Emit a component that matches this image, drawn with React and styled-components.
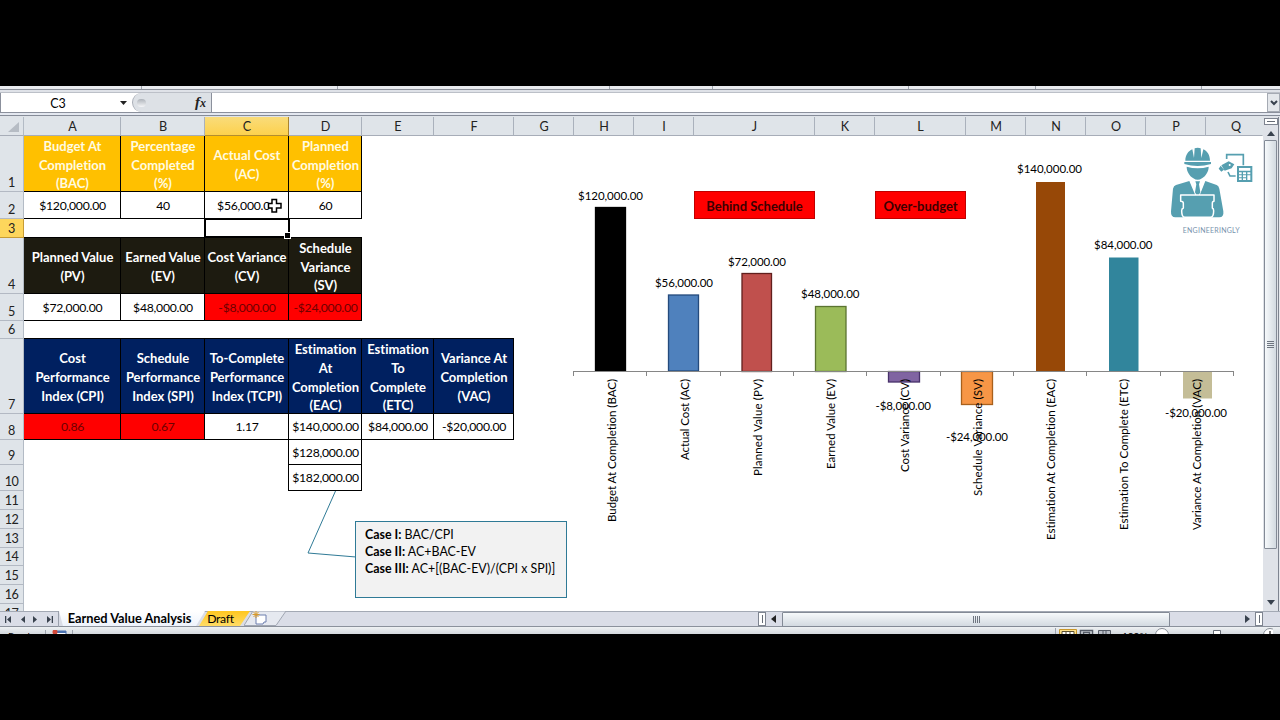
import React from "react";
import styled, {createGlobalStyle} from "styled-components";

const GlobalStyle = createGlobalStyle`
  * {
    box-sizing: border-box;
  }

  body {
    margin: 0;
    background: #000;
    font-family: Lato, "Open Sans", sans-serif;
    font-variant-ligatures: none;
    color: #000;
  }
`

const Screen = styled.div`
    width: 1280px;
    height: 720px;
    padding-top: 86px;
    background: #000;
    overflow: hidden;
`

const Window = styled.div`
    height: 548px;
    display: flex;
    flex-direction: column;
    background: #dfe3e8;
    overflow: hidden;
`

const RibbonEdge = styled.div`
    height: 7px;
    flex: none;
    display: flex;
    background: linear-gradient(#e9ecf0 0 3px, #8c919b 3px 4px, #dfe2e8 4px 6px, #bcc0c8 6px);
`

const RibbonGroup = styled.div`
    width: ${({$width}) => $width}px;
    height: 3px;
    border-right: 1px solid #9fa5ae;
`

const FormulaBar = styled.div`
    height: 24px;
    flex: none;
    display: flex;
    align-items: flex-start;
    background: linear-gradient(#fff 0 19px, #8b909c 19px 20px, #e4e8f0 20px 22px, #868c98 22px 23px, #dfe3e8 23px);
`

const NameBox = styled.div`
    width: 132px;
    height: 19px;
    display: flex;
    align-items: center;
    padding-top: 1px;
    border-left: 1px solid #8b909c;
    font-size: 12.5px;

  span {
    width: 114px;
    text-align: center;
  }
`

const FunctionBox = styled.div`
    width: 80px;
    height: 19px;
    display: flex;
    align-items: center;
    justify-content: space-between;
    padding: 0 5px 0 4px;
    background: #dde1e6;
    border-left: 1px solid #a9aeb7;
    border-right: 1px solid #8b909c;
    border-radius: 10px 0 0 10px;
    font: italic bold 15px "Liberation Serif", serif;
    color: #222;

  small {
    font-size: 12px;
  }
`

const Knob = styled.i`
    width: 9px;
    height: 8px;
    border-radius: 4px;
    background: linear-gradient(#aeb3ba, #f5f6f8);
`

const FormulaInput = styled.div`
    flex: 1;
`

const ExpandButton = styled.div`
    width: 13px;
    height: 19px;
    display: flex;
    align-items: center;
    justify-content: center;
    background: #e4e7eb;
    border: 1px solid #a5aab3;
`

const Main = styled.div`
    height: 494px;
    flex: none;
    display: flex;
`

const Sheet = styled.div`
    position: relative;
    width: 1263px;
    height: 494px;
    display: grid;
    grid-template-columns: 24px 97px 84px 84px 73px 72px 80px 60px 60px 60px 121px 60px 91px 60px 60px 60px 60px 57px;
    grid-template-rows: 19px 56px 27px 19px 56px 27px 18px 75px 26px 25px 26px 19px 19px 19px 18px 19px 19px 19px;
    background: #fff;
    overflow: hidden;
`

const Corner = styled.div`
    display: flex;
    align-items: flex-end;
    justify-content: flex-end;
    padding: 0 4px 3px 0;
    background: #dfe4e9;
    border-right: 1px solid #b3bbc5;
    border-bottom: 1px solid #a7adb8;
`

const ColumnHead = styled.div`
    display: flex;
    align-items: center;
    justify-content: center;
    padding: 1px 0 0 ${({$last}) => $last ? 4 : 1}px;
    background: ${({$active}) => $active ? 'linear-gradient(#f9dc7a, #fdd14d)' : '#dfe4e9'};
    border-right: 1px solid ${({$active, $last}) => $last ? 'transparent' : $active ? '#a98431' : '#aab1bc'};
    border-bottom: 1px solid ${({$active}) => $active ? '#b28d31' : '#a7adb8'};
    font-size: 12.6px;
    color: #222;
`

const RowHead = styled.div`
    grid-column: 1;
    grid-row: ${({$row}) => $row + 1};
    display: flex;
    align-items: flex-end;
    justify-content: center;
    background: ${({$active}) => $active ? '#fdd65c' : '#dfe4e9'};
    border-right: 1px solid ${({$active}) => $active ? '#c79c34' : '#b3bbc5'};
    border-bottom: 1px solid ${({$active}) => $active ? '#c79c34' : '#b3b9c3'};
    font-size: 12.6px;
    letter-spacing: -0.5px;
    line-height: 16px;
    color: #222;
`

const fills = {
    gold: ['#ffc000', '#fffbe0'],
    dark: ['#1d1b10', '#fff'],
    navy: ['#002060', '#fff'],
    red: ['#ff0000', '#6e0000'],
    plain: ['#fff', '#000'],
}

const Cell = styled.div`
    grid-column: ${({$col}) => $col + 1};
    grid-row: ${({$row}) => $row + 1};
    display: flex;
    align-items: center;
    justify-content: center;
    padding: ${({$head}) => $head ? 3 : 2}px 0 0 1px;
    margin-left: ${({$row}) => $row > 8 ? -1 : 0}px;
    background: ${({$fill}) => fills[$fill][0]};
    color: ${({$fill}) => fills[$fill][1]};
    border-right: 1px solid #000;
    border-bottom: 1px solid #000;
    border-left: ${({$row}) => $row > 8 ? '1px solid #000' : 'none'};
    font-size: ${({$head}) => $head ? '13px' : '12.2px'};
    font-weight: ${({$head}) => $head ? 700 : 400};
    letter-spacing: ${({$head}) => $head ? 0 : -0.24}px;
    line-height: 18.7px;
    text-align: center;
    white-space: pre;
`

const TopRule = styled.div`
    grid-column: 2 / ${({$to}) => $to};
    grid-row: ${({$row}) => $row + 1};
    align-self: end;
    height: 1px;
    background: #000;
`

const Selection = styled.div`
    grid-column: 4;
    grid-row: 4;
    position: relative;
    z-index: 1;
    margin: -1px -1px 0;
    border: 2px solid #000;

  &::after {
    content: "";
    position: absolute;
    right: -3px;
    bottom: -3px;
    width: 5px;
    height: 5px;
    background: #000;
    border: 1px solid #fff;
  }
`

const Flag = styled.div`
    grid-column: ${({$col}) => $col};
    grid-row: 3;
    z-index: 2;
    margin: -1px 0 0 ${({$shift}) => $shift || 0}px;
    padding-top: 1px;
    display: flex;
    align-items: center;
    justify-content: center;
    background: #ff0000;
    border: 1px solid #c00000;
    color: #3c0000;
    font-size: 13px;
    font-weight: 700;
`

const Overlay = styled.svg`
    position: absolute;
    left: ${({$left}) => $left}px;
    top: ${({$top}) => $top}px;
    z-index: ${({$z}) => $z || 1};
`

const Note = styled.div`
    position: absolute;
    left: 355px;
    top: 404px;
    width: 212px;
    height: 77px;
    padding: 4px 9px;
    background: #f2f2f2;
    border: 1px solid #2f7a96;
    font-size: 12.4px;
    line-height: 17px;
    white-space: nowrap;
`

const VerticalScroll = styled.div`
    width: 17px;
    display: flex;
    flex-direction: column;
    align-items: center;
    padding: 1px 2px 2px 0;
    background: linear-gradient(90deg, #dfe2e8 0 15px, #7e8490 15px 16px, #e4e7ec 16px);

  svg {
    margin: 6px 0 4px;
  }
`

const SplitBox = styled.div`
    width: ${({$wide}) => $wide ? 14 : 8}px;
    height: ${({$wide}) => $wide ? 7 : 14}px;
    flex: none;
    display: flex;
    align-items: center;
    justify-content: center;
    background: #fff;
    border: 1px solid #7e8490;

  i {
    width: ${({$wide}) => $wide ? 8 : 1}px;
    height: ${({$wide}) => $wide ? 1 : 8}px;
    background: #666c76;
  }
`

const Thumb = styled.div`
    display: flex;
    flex-direction: ${({$vertical}) => $vertical ? 'column' : 'row'};
    gap: 1px;
    align-items: center;
    justify-content: center;
    width: ${({$vertical}) => $vertical ? '13px' : '388px'};
    height: ${({$vertical}) => $vertical ? '409px' : '15px'};
    background: linear-gradient(${({$vertical}) => $vertical ? '90deg' : '180deg'}, #f6f9fb, #d3dae1);
    border: 1px solid #838a96;
    border-radius: 1px;

  i {
    width: ${({$vertical}) => $vertical ? 7 : 1}px;
    height: ${({$vertical}) => $vertical ? 1 : 7}px;
    background: #6e7580;
  }
`

const Spacer = styled.div`
    flex: 1;
`

const TabBar = styled.div`
    height: 16px;
    flex: none;
    display: flex;
    background: linear-gradient(#a3a9b4 0 1px, #dadde7 1px 15px, #8b919c 15px);
`

const TabNav = styled.div`
    width: 59px;
    display: flex;
    align-items: center;
    justify-content: space-between;
    padding: 0 5px;
    border-right: 1px solid #9aa0ac;
`

const Tab = styled.div`
    position: relative;
    width: ${({$width}) => $width}px;
    height: 15px;
    margin-right: -6px;
    padding-right: ${({$pad}) => $pad || 0}px;
    display: flex;
    align-items: center;
    justify-content: center;
    background: ${({$fill}) => $fill};
    clip-path: ${({$first}) => $first ? 'polygon(0 0, 100% 0, calc(100% - 9px) 100%, 4px 100%)' : 'polygon(9px 0, 100% 0, calc(100% - 10px) 100%, 0 100%)'};
    font-size: ${({$first}) => $first ? 12.8 : 12.2}px;
    font-weight: ${({$first}) => $first ? 700 : 400};
    letter-spacing: ${({$first}) => $first ? 0 : -0.3}px;
    line-height: 15px;
    white-space: nowrap;
`

const HorizontalScroll = styled.div`
    width: 522px;
    margin-left: auto;
    padding-right: 17px;
    display: flex;
    align-items: center;
`

const ScrollTrack = styled.div`
    flex: 1;
    display: flex;
    align-items: center;
    padding: 0 5px;

  ${Thumb} {
    margin: 0 auto 0 6px;
  }
`

const StatusBar = styled.div`
    position: relative;
    height: 7px;
    flex: none;
    display: flex;
    align-items: flex-start;
    justify-content: space-between;
    background: linear-gradient(#eef1f3, #d4d9de);
    font-size: 10px;
    line-height: 12px;
    overflow: hidden;
`

const StatusLeft = styled.div`
    display: flex;
    gap: 10px;
    padding: 3px 0 0 8px;
`

const StatusRight = styled.div`
    display: flex;
    width: 225px;
    padding-top: 1px;

  span {
    margin: 2px 2px 0 11px;
  }
`

const columns = 'ABCDEFGHIJKLMNOPQ'.split('')
const rows = Array.from({length: 17}, (_, i) => i + 1)

// [column, row, fill, text, is header]
const cells = [
    [1, 1, 'gold', 'Budget At\nCompletion\n(BAC)', true],
    [2, 1, 'gold', 'Percentage\nCompleted\n(%)', true],
    [3, 1, 'gold', 'Actual Cost\n(AC)', true],
    [4, 1, 'gold', 'Planned\nCompletion\n(%)', true],
    [1, 2, 'plain', '$120,000.00'],
    [2, 2, 'plain', '40'],
    [3, 2, 'plain', '$56,000.00'],
    [4, 2, 'plain', '60'],
    [1, 4, 'dark', 'Planned Value\n(PV)', true],
    [2, 4, 'dark', 'Earned Value\n(EV)', true],
    [3, 4, 'dark', 'Cost Variance\n(CV)', true],
    [4, 4, 'dark', 'Schedule\nVariance\n(SV)', true],
    [1, 5, 'plain', '$72,000.00'],
    [2, 5, 'plain', '$48,000.00'],
    [3, 5, 'red', '-$8,000.00'],
    [4, 5, 'red', '-$24,000.00'],
    [1, 7, 'navy', 'Cost\nPerformance\nIndex (CPI)', true],
    [2, 7, 'navy', 'Schedule\nPerformance\nIndex (SPI)', true],
    [3, 7, 'navy', 'To-Complete\nPerformance\nIndex (TCPI)', true],
    [4, 7, 'navy', 'Estimation\nAt\nCompletion\n(EAC)', true],
    [5, 7, 'navy', 'Estimation\nTo\nComplete\n(ETC)', true],
    [6, 7, 'navy', 'Variance At\nCompletion\n(VAC)', true],
    [1, 8, 'red', '0.86'],
    [2, 8, 'red', '0.67'],
    [3, 8, 'plain', '1.17'],
    [4, 8, 'plain', '$140,000.00'],
    [5, 8, 'plain', '$84,000.00'],
    [6, 8, 'plain', '-$20,000.00'],
    [4, 9, 'plain', '$128,000.00'],
    [4, 10, 'plain', '$182,000.00'],
]

// chart space starts at x 560, y 140; the zero axis is at y 231
const bars = [
    {name: 'Budget At Completion (BAC)', len: 143, x: 35.5, w: 30, y: 67.5, h: 163.5, fill: '#000', line: '#000', label: '$120,000.00', lx: 18, ly: 60, lw: 65},
    {name: 'Actual Cost (AC)', len: 81, x: 108.5, w: 30, y: 155, h: 76, fill: '#4f81bd', line: '#244a7c', label: '$56,000.00', lx: 95, ly: 147, lw: 58},
    {name: 'Planned Value (PV)', len: 97, x: 182, w: 29.5, y: 133.5, h: 98, fill: '#c0504d', line: '#611f1d', label: '$72,000.00', lx: 168, ly: 125.5, lw: 58},
    {name: 'Earned Value (EV)', len: 90, x: 255.5, w: 30.5, y: 166.5, h: 65, fill: '#9bbb59', line: '#5b7430', label: '$48,000.00', lx: 241, ly: 157.5, lw: 58.5},
    {name: 'Cost Variance (CV)', len: 93, x: 328.5, w: 31, y: 231.5, h: 10.5, fill: '#8064a2', line: '#47316a', label: '-$8,000.00', lx: 315.5, ly: 270, lw: 55.5},
    {name: 'Schedule Variance (SV)', len: 117, x: 401.5, w: 31, y: 231.5, h: 33, fill: '#f79646', line: '#a8601c', label: '-$24,000.00', lx: 386, ly: 301, lw: 62},
    {name: 'Estimation At Completion (EAC)', len: 161, x: 476, w: 29, y: 42, h: 189, fill: '#974807', line: 'none', label: '$140,000.00', lx: 457, ly: 32.5, lw: 65},
    {name: 'Estimation To Complete (ETC)', len: 151, x: 549, w: 29.5, y: 117.5, h: 113.5, fill: '#31859c', line: 'none', label: '$84,000.00', lx: 534, ly: 109, lw: 58.5},
    {name: 'Variance At Completion (VAC)', len: 151, x: 623, w: 29, y: 231, h: 27.5, fill: '#c4bd97', line: 'none', label: '-$20,000.00', lx: 605, ly: 276.5, lw: 62},
]

function Arrow({dir, color = '#39424e', width = 8, height = 5}) {
    const d = {
        down: 'M0 0H8L4 5Z',
        up: 'M0 5H8L4 0Z',
        left: 'M8 0V5L0 2.5Z',
        right: 'M0 0V5L8 2.5Z',
    }[dir]
    return (
        <svg width={width} height={height} viewBox="0 0 8 5" preserveAspectRatio="none">
            <path d={d} fill={color}/>
        </svg>
    )
}

function EdgeArrow({flip}) {
    return (
        <svg width="7" height="7" viewBox="0 0 7 7" fill="#39424e" transform={flip ? 'scale(-1 1)' : undefined}>
            <path d="M0 0h1.3v7H0zM6 0v7L2 3.5z"/>
        </svg>
    )
}

function Chart() {
    const step = 660 / 9
    return (
        <Overlay $left={560} $top={23} width="700" height="410" fontSize="11.5">
            {bars.map((b) => (
                <rect key={b.name} x={b.x} y={b.y} width={b.w} height={b.h} fill={b.fill} stroke={b.line} strokeWidth="1.3"/>
            ))}
            <path d={'M13.5 231.5H674' + bars.map((b, i) => `M${Math.round(i * step) + 13.5} 231v5`).join('') + 'M673.5 231v5'} stroke="#868686" fill="none"/>
            {bars.map((b, i) => (
                <g key={b.name}>
                    <text x={b.lx} y={b.ly} textLength={b.lw}>{b.label}</text>
                    <text
                        transform={`translate(${56 + i * 73.15} ${239 + b.len}) rotate(-90)`}
                        textLength={b.len}
                    >
                        {b.name}
                    </text>
                </g>
            ))}
        </Overlay>
    )
}

function Logo() {
    return (
        <Overlay $left={1166} $top={27} width="90" height="92" viewBox="48 12 270 276" fill="#569fb0">
            <path d="M106 62c0-17 9-29 21-34l5 26 2-29c5-2 13-2 18 0l2 29 6-26c12 6 20 17 20 34z"/>
            <path d="M103 66h80v6q-40 12-80 0z"/>
            <path d="M110 80q33 9 66 0c0 14-8 27-20 35q-13 9-26 0c-12-8-20-21-20-35z"/>
            <path d="M118 123L78 135Q71 137 69 146L63 214Q62 232 76 232H208Q222 232 220 214L208 146Q206 137 200 135L166 123L149 166H136Z"/>
            <path d="M120 121L139 167H147L165 121Z" fill="#fff"/>
            <path d="M136 124h14l-3 9 4 24-5 9h-6l-5-9 4-24z"/>
            <path d="M92 165h100v19q-5 0-5 6v14q4 2 4 8 0 20-10 20H105q-10 0-10-20 0-6 5-8v-14q0-6-8-6z" stroke="#fff" strokeWidth="4.500" strokeLinejoin="round"/>
            <path d="M230 57V44h50v32M234 96l6 12h17" fill="none" stroke="#569fb0" strokeWidth="5"/>
            <path d="M206 86l6-9 10 12-8 6zM214 76l22-12 17 9-8 12-21 7z"/>
            <circle cx="239" cy="75" r="3" fill="#fff"/>
            <path d="M261 78h46v48h-46z"/>
            <path d="M267 84h34v8h-34zM267 97h8v6h-8zM279 97h9v6h-9zM292 97h9v6h-9zM267 106h8v6h-8zM279 106h9v6h-9zM292 106h9v14h-9zM267 115h8v5h-8zM279 115h9v5h-9z" fill="#fff"/>
            <text x="98" y="278" fontSize="21" fill="#7793ad" textLength="171">ENGINEERINGLY</text>
        </Overlay>
    )
}

function Cursor() {
    return (
        <Overlay $left={267} $top={81} $z={3} width="16" height="16" viewBox="0 0 16 16">
            <path d="M5 1.500h4.500v4H14V10H9.500v4H5v-4H1.500V5.500H5z" fill="#fff" stroke="#000" strokeWidth="1.500"/>
        </Overlay>
    )
}

export default function App() {
    return (
        <Screen>
            <GlobalStyle/>
            <Window>
                <RibbonEdge>
                    {[142, 196, 272, 103, 196, 127, 166].map((w, i) => <RibbonGroup key={i} $width={w}/>)}
                </RibbonEdge>
                <FormulaBar>
                    <NameBox>
                        <span>C3</span>
                        <Spacer/>
                        <Arrow dir="down" color="#222" width={7} height={4}/>
                        <Spacer/>
                    </NameBox>
                    <FunctionBox>
                        <Knob/>
                        <div>f<small>x</small></div>
                    </FunctionBox>
                    <FormulaInput/>
                    <ExpandButton>
                        <svg width="8" height="6" viewBox="0 0 8 6"><path d="M1 1l3 3 3-3" fill="none" stroke="#39424e" strokeWidth="2"/></svg>
                    </ExpandButton>
                </FormulaBar>
                <Main>
                    <Sheet>
                        <Corner>
                            <svg width="11" height="10" viewBox="0 0 11 10"><path d="M11 0V10H0Z" fill="#b6bcc4"/></svg>
                        </Corner>
                        {columns.map((c) => <ColumnHead key={c} $active={c === 'C'} $last={c === 'Q'}>{c}</ColumnHead>)}
                        {rows.map((r) => <RowHead key={r} $row={r} $active={r === 3}>{r}</RowHead>)}
                        {cells.map(([col, row, fill, text, head]) => (
                            <Cell key={`${col}-${row}`} $col={col} $row={row} $fill={fill} $head={head}>{text}</Cell>
                        ))}
                        <TopRule $row={3} $to={6}/>
                        <TopRule $row={6} $to={8}/>
                        <Selection/>
                        <Flag $col="10 / 12" $shift={60}>Behind Schedule</Flag>
                        <Flag $col="13">Over-budget</Flag>
                        <Chart/>
                        <Logo/>
                        <Overlay $left={300} $top={370} width="60" height="75">
                            <path d="M35.500 4L8 66L56 70" fill="none" stroke="#2f7a96" strokeWidth="1"/>
                        </Overlay>
                        <Note>
                            <div><b>Case I:</b> BAC/CPI</div>
                            <div><b>Case II:</b> AC+BAC-EV</div>
                            <div><b>Case III:</b> AC+[(BAC-EV)/(CPI x SPI)]</div>
                        </Note>
                        <Cursor/>
                    </Sheet>
                    <VerticalScroll>
                        <SplitBox $wide><i/></SplitBox>
                        <Arrow dir="up"/>
                        <Thumb $vertical><i/><i/><i/><i/></Thumb>
                        <Spacer/>
                        <Arrow dir="down"/>
                    </VerticalScroll>
                </Main>
                <TabBar>
                    <TabNav>
                        <EdgeArrow/>
                        <Arrow dir="left" width={4} height={7}/>
                        <Arrow dir="right" width={4} height={7}/>
                        <EdgeArrow flip/>
                    </TabNav>
                    <Tab $first $width={146} $pad={5} $fill="linear-gradient(#fff, #eef3fc)">Earned Value Analysis</Tab>
                    <Tab $width={51} $pad={8} $fill="linear-gradient(#ffc61f, #ffdc66)">Draft</Tab>
                    <svg width="44" height="15" viewBox="0 0 44 15">
                        <path d="M9 0H42L32 14.500H0Z" fill="#e6e9f0" stroke="#a0a6b2"/>
                        <path d="M12 4h10v7h-2l-1 2h-7z" fill="#fff" stroke="#6d7fae"/>
                        <path d="M12 0v7M8.500 3.500h7M9.500 1l5 5M14.500 1l-5 5" stroke="#d89a2b"/>
                    </svg>
                    <HorizontalScroll>
                        <SplitBox><i/></SplitBox>
                        <ScrollTrack>
                            <Arrow dir="left" width={5} height={8} color="#222"/>
                            <Thumb><i/><i/><i/><i/></Thumb>
                            <Arrow dir="right" width={5} height={8}/>
                        </ScrollTrack>
                        <SplitBox><i/></SplitBox>
                    </HorizontalScroll>
                </TabBar>
                <StatusBar>
                    <StatusLeft>
                        <div>Ready</div>
                        <svg width="28" height="7" viewBox="0 0 28 7">
                            <path d="M.500 0v7M27.500 0v7" stroke="#9da3ad"/>
                            <path d="M10 1h11v6H10z" fill="#fff" stroke="#4b72b0"/>
                            <path d="M10 1h11v2H10z" fill="#4b72b0"/>
                            <circle cx="10" cy="2" r="2.500" fill="#d44a3a"/>
                        </svg>
                    </StatusLeft>
                    <StatusRight>
                        <svg width="56" height="7" viewBox="0 0 56 7">
                            <path d="M.500 0v7" stroke="#9da3ad"/>
                            <path d="M4.500 7V1.500h17V7" fill="#ffe28a" stroke="#c8962b"/>
                            <path d="M7 7V3.500h12V7M11 3v4M15 3v4" fill="#fff" stroke="#5a5030"/>
                            <path d="M25.500 7V2.500h12V7M28.500 7V4.500h6V7" fill="none" stroke="#555b66" strokeWidth="1.500"/>
                            <path d="M43.500 7V2.500h12V7M48 2v5M51 2v5" fill="#b9bec6" stroke="#555b66"/>
                        </svg>
                        <span>100%</span>
                        <svg width="124" height="7" viewBox="0 0 124 7">
                            <circle cx="13" cy="7" r="6.500" fill="#fff" stroke="#868c96"/>
                            <path d="M64.500 7V2.500h7V7" fill="#fff" stroke="#666c76"/>
                            <circle cx="121" cy="7" r="6.500" fill="#fff" stroke="#868c96"/>
                            <path d="M121 3v4" stroke="#444" strokeWidth="1.500"/>
                        </svg>
                    </StatusRight>
                </StatusBar>
            </Window>
        </Screen>
    );
};
